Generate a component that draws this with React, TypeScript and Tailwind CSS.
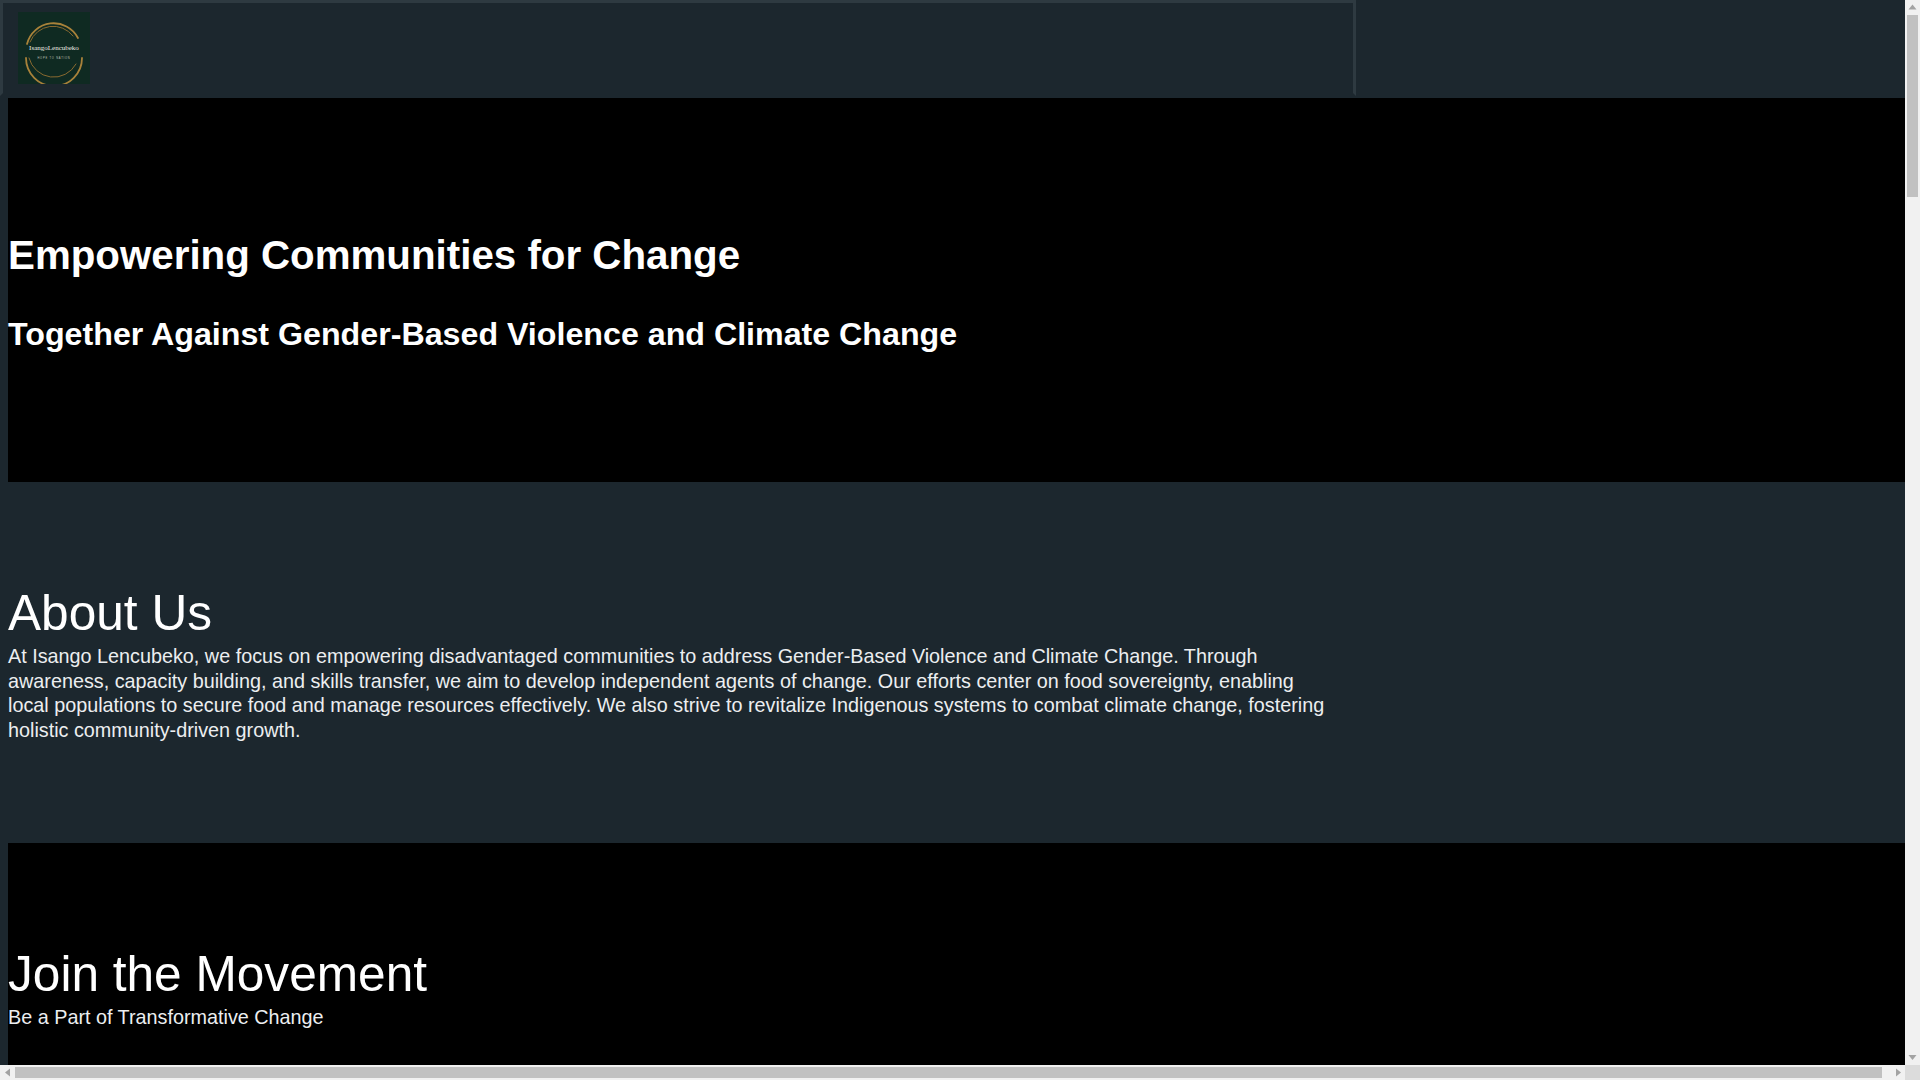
function Logo() {
  return (
    <svg width="72" height="72" viewBox="0 0 72 72" className="block">
      <rect width="72" height="72" fill="#0f2a22" />
      <g fill="none" strokeLinecap="round">
        <path d="M9 32 A27.5 27.5 0 0 1 60 26" strokeWidth="1.8" stroke="#a8823a" />
        <path d="M12 30 A25 25 0 0 1 55 24" strokeWidth="1" stroke="#8a6a30" />
        <path d="M8 46 A28 28 0 0 0 64 46" strokeWidth="1.8" stroke="#a8823a" />
        <path d="M11 46 A25.5 25.5 0 0 0 58 52" strokeWidth="1" stroke="#8a6a30" />
      </g>
      <text x="36" y="38" textAnchor="middle" fontSize="7" fill="#f0eee6" fontFamily="Liberation Serif, serif">
        IsangoLencubeko
      </text>
      <text x="36" y="46.5" textAnchor="middle" fontSize="2.6" letterSpacing="0.8" fill="#c3c8bd" fontFamily="Liberation Sans, sans-serif">
        HOPE TO NATION
      </text>
    </svg>
  )
}

function ScrollArrow({ points, className }: { points: string; className: string }) {
  return (
    <svg width="15" height="15" viewBox="0 0 15 15" className={className}>
      <polygon points={points} fill="#a3a3a3" />
    </svg>
  )
}

function Page() {
  return (
    <div className="w-[1913px] text-white">
      <header className="h-[98px]">
        <div className="h-[96px] w-[1356px] border-[3px] border-[#2e3a41] border-b-[#1c272e] pt-[9px] pl-[15px]">
          <Logo />
        </div>
      </header>

      <section className="ml-2 h-[384px] w-[1905px] bg-black pt-[135px]">
        <h1 className="text-[40.3px] leading-[46px] font-bold">Empowering Communities for Change</h1>
        <h2 className="mt-[37px] text-[32.2px] leading-[37px] font-bold">Together Against Gender-Based Violence and Climate Change</h2>
      </section>

      <section className="ml-2 h-[361px] w-[1330px] pt-[104px]">
        <h2 className="text-[49.6px] leading-[55px]">About Us</h2>
        <p className="mt-[3px] text-[19.8px] leading-[24.5px] text-[#eceef0]">
          At Isango Lencubeko, we focus on empowering disadvantaged communities to address Gender-Based Violence and Climate Change. Through awareness, capacity building, and skills transfer, we aim to develop independent agents of change. Our efforts center on food sovereignty, enabling local populations to secure food and manage resources effectively. We also strive to revitalize Indigenous systems to combat climate change, fostering holistic community-driven growth.
        </p>
      </section>

      <section className="ml-2 h-[300px] w-[1905px] bg-black pt-[104px]">
        <h2 className="text-[49.6px] leading-[55px]">Join the Movement</h2>
        <p className="mt-[3px] text-[19.8px] leading-[24px] text-[#eceef0]">Be a Part of Transformative Change</p>
      </section>
    </div>
  )
}

export default function App() {
  return (
    <div className="flex h-screen w-screen flex-col overflow-hidden bg-[#1c272e] font-['Liberation_Sans',Arial,sans-serif]">
      <div className="flex min-h-0 flex-1">
        <main className="min-w-0 flex-1 overflow-hidden">
          <Page />
        </main>
        {/* vertical scrollbar */}
        <div className="flex w-[15px] flex-col bg-[#f1f1f1]">
          <ScrollArrow points="7.5,4.5 11.5,9.5 3.5,9.5" className="shrink-0" />
          <div className="mx-[2px] h-[182px] bg-[#c1c1c1]" />
          <div className="flex-1" />
          <ScrollArrow points="3.5,5 11.5,5 7.5,10" className="shrink-0" />
        </div>
      </div>
      {/* horizontal scrollbar */}
      <div className="flex h-[15px] bg-[#f1f1f1]">
        <ScrollArrow points="5,7.5 10,3.5 10,11.5" className="shrink-0" />
        <div className="my-[2px] w-[1867px] bg-[#c1c1c1]" />
        <div className="flex-1" />
        <ScrollArrow points="6,3.5 11,7.5 6,11.5" className="shrink-0" />
        <div className="w-[15px] bg-[#dcdcdc]" />
      </div>
    </div>
  )
}
